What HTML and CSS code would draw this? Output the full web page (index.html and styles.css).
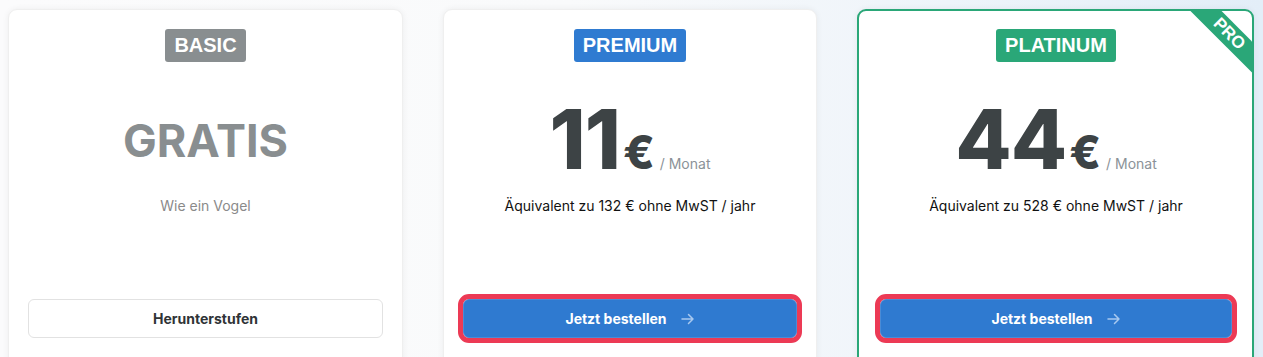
FILE: index.html
```html
<!DOCTYPE html>
<html lang="de">
<head>
    <meta charset="UTF-8">
    <meta name="viewport" content="width=device-width, initial-scale=1.0">
    <title>Preise</title>
    <link rel="stylesheet" href="styles.css">
</head>
<body>
    <div class="plans">
        <div class="plan">
            <span class="badge badge-basic">BASIC</span>
            <div class="price price-free">GRATIS</div>
            <p class="note note-muted">Wie ein Vogel</p>
            <button class="btn btn-light">Herunterstufen</button>
        </div>

        <div class="plan">
            <span class="badge badge-premium">PREMIUM</span>
            <div class="price">
                <span class="amount">11</span><span class="currency">€</span><span class="period">/ Monat</span>
            </div>
            <p class="note">Äquivalent zu 132 € ohne MwST / jahr</p>
            <button class="btn btn-primary">
                Jetzt bestellen
                <svg class="arrow" width="14" height="12" viewBox="0 0 14 12"><path d="M1 6h11M7.5 1.5L12 6l-4.5 4.5" fill="none" stroke="currentColor" stroke-width="1.5" stroke-linecap="round" stroke-linejoin="round"/></svg>
            </button>
        </div>

        <div class="plan plan-pro">
            <div class="ribbon">PRO</div>
            <span class="badge badge-platinum">PLATINUM</span>
            <div class="price">
                <span class="amount">44</span><span class="currency">€</span><span class="period">/ Monat</span>
            </div>
            <p class="note">Äquivalent zu 528 € ohne MwST / jahr</p>
            <button class="btn btn-primary">
                Jetzt bestellen
                <svg class="arrow" width="14" height="12" viewBox="0 0 14 12"><path d="M1 6h11M7.5 1.5L12 6l-4.5 4.5" fill="none" stroke="currentColor" stroke-width="1.5" stroke-linecap="round" stroke-linejoin="round"/></svg>
            </button>
        </div>
    </div>
</body>
</html>
```

FILE: styles.css
```css
html, body {
    margin: 0;
    height: 100%;
}
body {
    font-family: Inter, 'Liberation Sans', sans-serif;
    padding: 9px 8px 0;
    box-sizing: border-box;
    overflow: hidden;
    background: linear-gradient(90deg, #fbfbfc 0%, #f9fafb 45%, #eef4fa 75%, #e3eef8 100%);
}
.plans {
    display: grid;
    grid-template-columns: 395px 374px 397px;
    column-gap: 40px;
}
.plan {
    position: relative;
    display: flex;
    flex-direction: column;
    align-items: center;
    min-height: 380px;
    padding: 19px 19px 0;
    background: #fff;
    border: 1px solid #efefef;
    border-radius: 9px;
    box-shadow: 0 0 6px rgba(0,0,0,0.06);
    box-sizing: border-box;
}
.plan-pro {
    border: 2px solid #2aa778;
    padding: 18px 20px 0 21px;
    overflow: hidden;
}
.ribbon {
    position: absolute;
    top: 12px;
    right: -27px;
    width: 100px;
    height: 22px;
    line-height: 22px;
    background: #2aa778;
    color: #fff;
    font-family: 'Liberation Sans', sans-serif;
    font-weight: bold;
    font-size: 17px;
    text-align: center;
    transform: rotate(45deg);
}
.badge {
    display: inline-block;
    padding: 0 9px;
    line-height: 33px;
    border-radius: 3px;
    color: #fff;
    font-family: 'Liberation Sans', sans-serif;
    font-weight: bold;
    font-size: 20px;
}
.badge-basic { background: #898e90; }
.badge-premium { background: #2f7bd1; }
.badge-platinum { background: #2aa778; }

.price {
    display: flex;
    align-items: baseline;
    justify-content: center;
    height: 116px;
    line-height: 1;
    color: #3d4345;
}
.price-free {
    align-items: center;
    box-sizing: border-box;
    padding-top: 40px;
    color: #898e90;
    font-weight: 700;
    font-size: 45px;
}
.amount {
    font-size: 82px;
    font-weight: 800;
    letter-spacing: -1px;
    margin-top: 37px;
}
.currency {
    margin-left: 3px;
    font-size: 46px;
    font-weight: 800;
}
.period {
    margin-left: 5px;
    font-size: 14px;
    color: #8b9298;
}
.note {
    margin: 18px 0 0;
    font-size: 14px;
    line-height: 20px;
    color: #111;
}
.note-muted {
    color: #8a8a8a;
}
.btn {
    display: flex;
    align-items: center;
    justify-content: center;
    gap: 14px;
    width: 100%;
    height: 39px;
    margin-top: 83px;
    border-radius: 6px;
    font-family: Inter, 'Liberation Sans', sans-serif;
    font-weight: 700;
    font-size: 14px;
    cursor: pointer;
}
.btn-light {
    background: #fff;
    border: 1px solid #e2e2e2;
    color: #2f3336;
}
.btn-primary {
    background: #2f7ad0;
    border: 1px solid #4a8bd6;
    color: #fff;
    outline: 5px solid #ec3a55;
    outline-offset: 0;
}
.arrow {
    color: #a8c9ef;
}
```
